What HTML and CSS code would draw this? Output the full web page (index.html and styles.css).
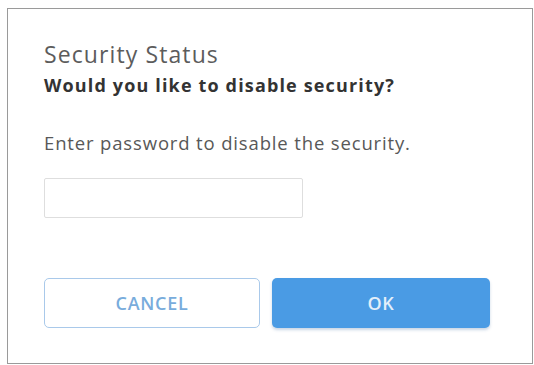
FILE: index.html
```html
<!DOCTYPE html>
<html>
<head>
<meta charset="utf-8">
<link rel="stylesheet" href="styles.css">
</head>
<body>
<div class="dialog">
  <h1 class="title">Security Status</h1>
  <p class="question">Would you like to disable security?</p>
  <p class="hint">Enter password to disable the security.</p>
  <input class="password" type="password">
  <div class="actions">
    <button class="btn btn-cancel">CANCEL</button>
    <button class="btn btn-ok">OK</button>
  </div>
</div>
</body>
</html>
```
FILE: styles.css
```css
html, body {
  margin: 0;
  padding: 0;
  background: #ffffff;
}
body {
  font-family: "Open Sans", "Noto Sans", sans-serif;
  width: 534px;
  height: 365px;
  overflow: hidden;
}
.dialog {
  box-sizing: border-box;
  margin: 8px 0 0 7px;
  width: 526px;
  height: 356px;
  border: 1px solid #9a9a9a;
  padding: 30px 0 0 36px;
  display: flex;
  flex-direction: column;
  align-items: flex-start;
}
.title {
  margin: 0;
  font-size: 23px;
  font-weight: 400;
  line-height: 30px;
  letter-spacing: 1.1px;
  color: #5c5c5c;
}
.question {
  margin: 3px 0 0 0;
  font-size: 18px;
  font-weight: 700;
  line-height: 26px;
  letter-spacing: 1.15px;
  color: #333333;
}
.hint {
  margin: 32px 0 0 0;
  font-size: 18.5px;
  font-weight: 400;
  line-height: 26px;
  letter-spacing: 0.85px;
  color: #585858;
}
.password {
  box-sizing: border-box;
  margin: 22px 0 0 0;
  width: 259px;
  height: 40px;
  border: 1.5px solid #dedede;
  border-radius: 2px;
  background: #fff;
  outline: none;
  padding: 0 8px;
}
.actions {
  margin-top: 60px;
  display: flex;
  gap: 12px;
}
.btn {
  box-sizing: border-box;
  height: 50px;
  border-radius: 5px;
  font-family: "Open Sans", "Noto Sans", sans-serif;
  font-size: 18px;
  font-weight: 600;
  letter-spacing: 0.7px;
  cursor: pointer;
}
.btn-cancel {
  width: 216px;
  background: #ffffff;
  border: 1.5px solid #a9c9ea;
  color: #78acdc;
}
.btn-ok {
  width: 218px;
  background: #4a9be4;
  border: none;
  color: #e3effa;
  box-shadow: 0 2px 3px rgba(40, 90, 150, 0.25);
}
```
